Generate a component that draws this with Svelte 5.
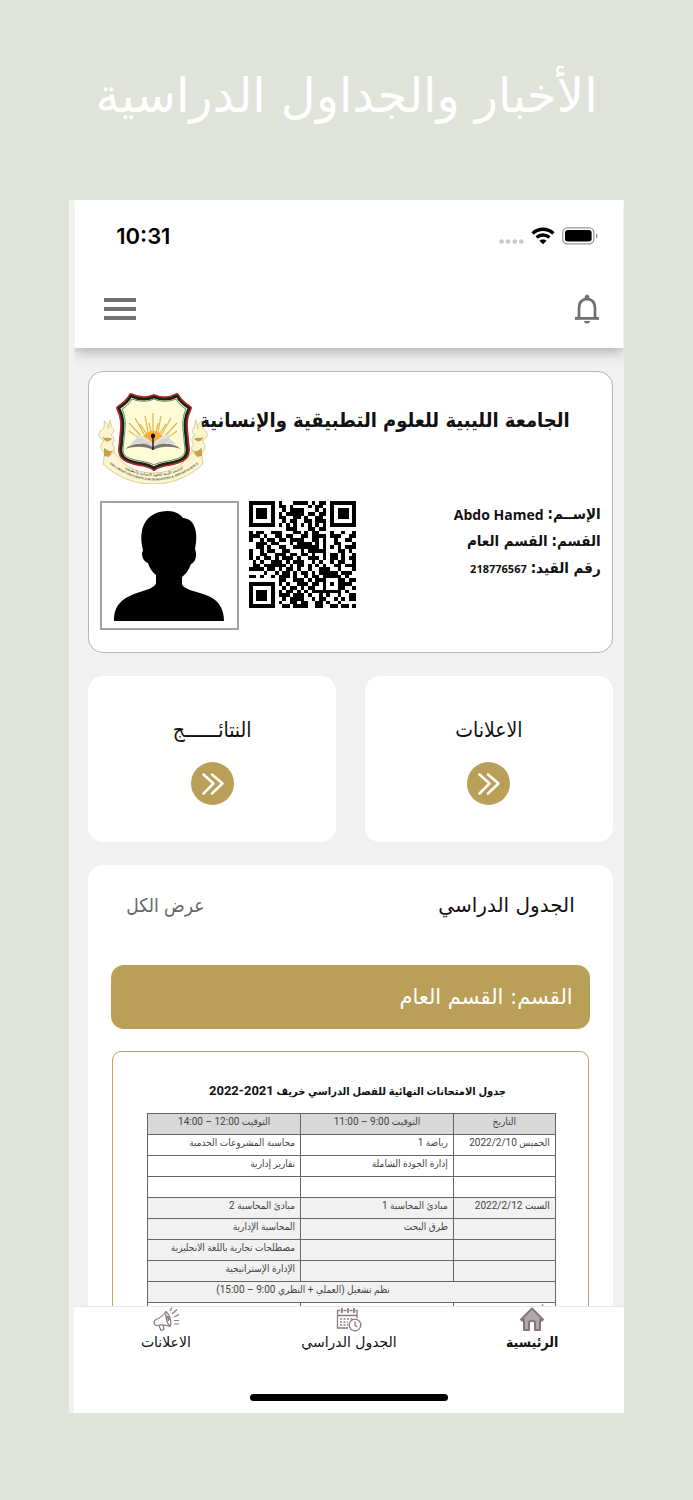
<script>
  const student = [
    { label: 'الإســم:', value: 'Abdo Hamed', kind: 'name' },
    { label: 'القسم:', value: 'القسم العام', kind: 'dept' },
    { label: 'رقم القيد:', value: '218776567', kind: 'number' }
  ];

  const shortcuts = [
    { title: 'الاعلانات', href: '#news' },
    { title: 'النتائــــــج', href: '#results' }
  ];

  const exams = [
    { cells: ['الخميس 2022/2/10', 'رياضة 1', 'محاسبة المشروعات الخدمية'] },
    { cells: ['', 'إدارة الجودة الشاملة', 'تقارير إدارية'] },
    { cells: ['', '', ''] },
    { cells: ['السبت 2022/2/12', 'مبادئ المحاسبة 1', 'مبادئ المحاسبة 2'], shaded: true },
    { cells: ['', 'طرق البحث', 'المحاسبة الإدارية'], shaded: true },
    { cells: ['', '', 'مصطلحات تجارية باللغة الانجليزية'], shaded: true },
    { cells: ['', '', 'الإدارة الإستراتيجية'], shaded: true },
    { wide: 'نظم تشغيل (العملي + النظري 9:00 – 15:00)', shaded: true },
    { cells: ['الأحد 2022/2/13', '', ''] }
  ];

  const qr = [
    '11111110100011110101101111111',
    '10000010110100001011001000001',
    '10111010010111100010101011101',
    '10111010101111101101101011101',
    '10111010110011010011001011101',
    '10000010010110011011101000001',
    '11111110101010101010101111111',
    '00000000001110001101100000000',
    '10110011100011010110001001001',
    '11101001101100110111101110011',
    '10010110110111100110100100110',
    '00111011000101111010100110001',
    '00110100110011111110101010111',
    '10010110011000101111100011010',
    '10011001110110110100101101001',
    '10101101011101001110101101011',
    '01010011101011100101001011001',
    '01101111110101101010100110111',
    '11110110101101001001110010001',
    '00001001011010110101111101110',
    '11010010111010010110111110100',
    '00000000110011101011100011011',
    '11111110101001110110101011110',
    '10000010010110101100100011001',
    '10111010101101010111111110100',
    '10111010111011101001010010011',
    '10111010010111100101100101011',
    '10000010100110110011010010000',
    '11111110011011110011001101101'
  ];

  const qrPath = qr
    .map((row, y) => [...row].map((c, x) => (c === '1' ? `M${x} ${y}h1v1h-1z` : '')).join(''))
    .join('');
</script>

<div class="page" dir="rtl" lang="ar">
  <h1>الأخبار والجداول الدراسية</h1>

  <main class="phone">
    <header>
      <div class="status" dir="ltr">
        <span class="time">10:31</span>
        <div class="signals">
          <svg width="25" height="5" viewBox="0 0 25 5" fill="#cacaca">
            <circle cx="2.5" cy="2.5" r="2.3" />
            <circle cx="9" cy="2.5" r="2.3" />
            <circle cx="15.8" cy="2.5" r="2.3" />
            <circle cx="22.4" cy="2.5" r="2.3" />
          </svg>
          <svg class="wifi" width="24" height="18" viewBox="0 0 24 18" fill="none" stroke="#000" stroke-width="3.4">
            <path d="M1.6 6.4C7.4 .9 16.6 .9 22.4 6.4" />
            <path d="M5.6 10.6c3.7-3.4 9.1-3.4 12.8 0" />
            <path d="M12 17.2 8.4 13.8c2-1.9 5.2-1.9 7.2 0z" fill="#000" stroke="none" />
          </svg>
          <svg width="36" height="18" viewBox="0 0 36 18">
            <rect x=".8" y=".8" width="31" height="16" rx="4.5" fill="none" stroke="#999" stroke-width="1.3" />
            <rect x="3" y="3" width="26.6" height="11.6" rx="2.5" />
            <path d="M34 6.4c2 .8 2 4.2 0 5z" fill="#888" />
          </svg>
        </div>
      </div>
      <div class="toolbar">
        <button aria-label="الإشعارات">
          <svg width="26" height="30" viewBox="0 0 26 30">
            <path
              d="M5 24V14.5C5 8.5 8 5.2 13 4.8c5 .4 8 3.7 8 9.7V24M1 24.4h24"
              fill="none"
              stroke="#707070"
              stroke-width="2.7"
            />
            <path d="M10.5 4.5C10.5 2 12 .6 13 .6S15.500 2 15.500 4.500zM10 27h6c-.4 1.800-1.600 2.500-3 2.500s-2.600-.7-3-2.500zM.6 25.600l4-4v4zM25.400 25.600l-4-4v4z" fill="#707070" />
          </svg>
        </button>
        <button aria-label="القائمة">
          <svg width="32" height="24" viewBox="0 0 32 24" fill="#707070">
            <path d="M0 1h32v4H0zM0 10h32v4H0zM0 19h32v4H0z" />
          </svg>
        </button>
      </div>
    </header>

    <div class="content">
      <section class="id-card">
        <div class="id-head">
          <h2>الجامعة الليبية للعلوم التطبيقية والإنسانية</h2>
          <svg class="crest" viewBox="0 0 110 92" aria-hidden="true">
            <defs>
              <path id="ribbon-ar" d="M14 69Q56 99 98 69" />
              <path id="ribbon-en" d="M9 70Q56 107 103 70" />
            </defs>
            <g fill="#fbf6cf" stroke="#d6c17c" stroke-width=".8">
              <path d="M7 59 5 72C18 84 34 92 55 92s37-8 50-20l-2-13-8-1C87 72 74 81 55 81S23 72 15 58z" />
              <path d="M6 61C1 56 3 51 6 49c-6-3-7-9-2-11 2-2 3-5 2-9 3 1 5 5 4 8l2-9 2 8c3 1 2 5-1 7 4 2 4 7 1 9 4 3 2 8-1 11z" />
              <path d="M104 61c5-5 3-10 0-12 6-3 7-9 2-11-2-2-3-5-2-9-3 1-5 5-4 8l-2-9-2 8c-3 1-2 5 1 7-4 2-4 7-1 9-4 3-2 8 1 11z" />
            </g>
            <g fill="#c7a04c">
              <path d="M4 44c3 4 6 0 10 3-4 4-8 3-10-3zM6 56c4 2 6 5 9 2l-4 7-5-1z" />
              <path d="M106 44c-3 4-6 0-10 3 4 4 8 3 10-3zM104 56c-4 2-6 5-9 2l4 7 5-1z" />
            </g>
            <g transform="translate(1 0)" stroke-linejoin="round">
              <path d="M32 3c8 4 16 4 23 1 7 3 16 3 23-1 3 6 7 9 13 13-6 12-4 20-3 31 0 4 1 8 1 11 0 9-8 12-19 14-7 1-12 2-15 5-3-3-8-4-15-5-11-2-19-5-19-14 0-3 1-7 1-11 1-11 3-19-3-31 6-4 10-7 13-13z" fill="#fffbd6" stroke="#b52a22" stroke-width="4" />
              <path d="M32 4c8 4 16 4 23 1 7 3 16 3 23-1 3 6 7 9 12 12-6 12-4 20-3 31 0 4 1 8 1 11 0 8-7 11-18 13-7 1-12 2-15 5-3-3-8-4-15-5-11-2-18-5-18-13 0-3 1-7 1-11 1-11 3-19-3-31 5-3 9-6 12-12z" fill="#fffbd6" stroke="#16251a" stroke-width="2.600" />
              <path d="M33 7c8 3 15 3 22 0 7 3 14 3 22 0 3 5 6 8 10 10-5 11-3 19-2 30 0 4 1 8 1 11 0 7-7 9-17 11-6 1-11 2-14 4-3-2-8-3-14-4-10-2-17-4-17-11 0-3 1-7 1-11 1-11 3-19-2-30 4-2 7-5 10-10z" fill="none" stroke="#6a8a5c" stroke-width="1" />
            </g>
            <path
              d="M55 40V21M50 40l-3-16M60 40l3-16M46 42l-9-16M64 42l9-16M43 44 31 31M67 44l12-13M41 46l-10-7M69 46l10-7M53 40l-2-9M58 40l2-9M48 41l-6-9M62 41l6-9"
              stroke="#e0b84f"
              stroke-width="1.300"
            />
            <path d="M43 53c0-19 24-19 24 0z" fill="#f8ae38" />
            <path d="m54 55-19-13c7 0 14 3 20 10 6-7 13-10 20-10L56 55z" fill="#e8e5df" />
            <path d="M27 57c9-7 20-6 28-2 8-4 19-5 28 2-10-3-20-3-28 1-8-4-18-4-28-1z" fill="#777" />
            <path d="m31 53 8-7c6 0 12 3 16 8 4-5 10-8 16-8l8 7c-10-3-18-2-24 2-6-4-14-5-24-2z" fill="#d6d6d6" />
            <path d="M54.300 58V46.500c-2.500-1.500-1.500-5 .7-5s3.200 3.500.7 5V58z" fill="#18120d" />
            <text class="ribbon" direction="rtl" text-anchor="middle">
              <textPath href="#ribbon-ar" startOffset="50%">الجامعة الليبية للعلوم الإنسانية والتطبيقية</textPath>
            </text>
            <text class="ribbon latin" direction="ltr" text-anchor="middle">
              <textPath href="#ribbon-en" startOffset="50%">THE LIBYAN UNIVERSITY FOR HUMANITIES &amp; APPLIED SCIENCE</textPath>
            </text>
          </svg>
        </div>

        <div class="id-body">
          <dl>
            {#each student as row}
              <div>
                <dt>{row.label}</dt>
                <dd class={row.kind}>{row.value}</dd>
              </div>
            {/each}
          </dl>
          <svg class="qr" viewBox="0 0 29 29" shape-rendering="crispEdges" role="img" aria-label="QR">
            <path d={qrPath} />
          </svg>
          <div class="photo">
            <svg viewBox="0 0 110 110" role="img" aria-label="صورة الطالب">
              <path d="M0 110C0 94 8 88 20 83c12-4 21-6 22-11V64c-4-3-7-8-8-12-4-1-6-6-6-9 0-2 1-3 1-4C23 15 34 0 54 0c7 0 12 3 15 7 11 0 16 14 12 31 1 3 1 4 1 6 0 4-2 8-5 9-2 5-4 9-9 13v7c1 5 12 7 24 11 11 4 18 12 18 26z" />
            </svg>
          </div>
        </div>
      </section>

      <nav class="shortcuts">
        {#each shortcuts as item}
          <a href={item.href}>
            <span>{item.title}</span>
            <svg width="43" height="43" viewBox="0 0 43 43" fill="none">
              <circle cx="21.500" cy="21.500" r="21.500" fill="#b99f57" />
              <path
                d="M12.500 12.500l10 9-10 10M21 12.500l10.500 9-10.500 10"
                stroke="#fff"
                stroke-width="2.600"
                stroke-linecap="round"
                stroke-linejoin="round"
              />
            </svg>
          </a>
        {/each}
      </nav>

      <section class="schedule">
        <div class="schedule-head">
          <h2>الجدول الدراسي</h2>
          <a href="#schedule">عرض الكل</a>
        </div>
        <p class="department">القسم: القسم العام</p>

        <div class="sheet">
          <h3>جدول الامتحانات النهائية للفصل الدراسي خريف <bdi>2022-2021</bdi></h3>
          <table>
            <thead>
              <tr>
                <th class="date">التاريخ</th>
                <th>التوقيت 9:00 – 11:00</th>
                <th>التوقيت 12:00 – 14:00</th>
              </tr>
            </thead>
            <tbody>
              {#each exams as row}
                <tr class:shaded={row.shaded}>
                  {#if row.wide}
                    <td class="wide" colspan="3">{row.wide}</td>
                  {:else}
                    {#each row.cells as cell}
                      <td>{cell}</td>
                    {/each}
                  {/if}
                </tr>
              {/each}
            </tbody>
          </table>
        </div>
      </section>
    </div>

    <footer>
      <nav class="tabs">
        <a href="#home" class="active">
          <svg width="26" height="25" viewBox="0 0 26 25">
            <path
              d="M13 1.500 2 12.500l1.300 1.200L5 12.500V23h5v-7c0-3 6-3 6 0v7h5V12.500l1.700 1.200 1.300-1.200z"
              fill="#aaa"
              stroke="#857777"
              stroke-width="2"
              stroke-linejoin="round"
            />
          </svg>
          <span>الرئيسية</span>
        </a>
        <a href="#schedule">
          <svg width="26" height="25" viewBox="0 0 26 25" fill="none" stroke="#8b7d7d" stroke-width="1.300">
            <path d="M12 21H1.500V3.500h3m3 0h3m3 0h3m3 0h1.500V11M1.500 8.500H21" />
            <path d="M6 1v5M12 1v5M18 1v5" stroke-width="1.800" />
            <path d="M4 12h13M4 15h8M4 18h8" stroke-dasharray="2 1.500" />
            <circle cx="19" cy="18" r="5.800" />
            <path d="M19 14.500V18l2 2" />
          </svg>
          <span>الجدول الدراسي</span>
        </a>
        <a href="#news">
          <svg width="26" height="25" viewBox="0 0 26 25" fill="none" stroke="#8b7d7d" stroke-width="1.200" stroke-linejoin="round">
            <path d="M13 4.500C10 9 7 11 3 12.500c-3 1.500-2 6 1 6 4-1 8-1 13 1 2-4 0-12-4-15z" />
            <path d="M13 4.500c-1 5 1 12 4 15M6 18.500l2 5 3-1-1-4.500" />
            <path d="M14 9c2 0 3 3 1.500 4.500z" fill="#8b7d7d" />
            <path d="M17 4l2-3.500M19 7l5-4.500M21 10l5-2.500M21 13.500h5M21 17h5" />
          </svg>
          <span>الاعلانات</span>
        </a>
      </nav>
      <div class="home-bar"></div>
    </footer>
  </main>
</div>

<style>
  :global(body) {
    margin: 0;
    background: #e0e3da;
  }

  .page {
    box-sizing: border-box;
    display: flex;
    flex-direction: column;
    height: 100vh;
    min-height: 900px;
    padding: 0 10% 87px;
    font-family: 'DejaVu Sans Condensed', 'DejaVu Sans', sans-serif;
    color: #111;
  }

  h1, h2, h3, p, dl, dd {
    margin: 0;
  }

  h1 {
    flex: none;
    height: 200px;
    line-height: 190px;
    text-align: center;
    white-space: nowrap;
    font-family: 'DejaVu Sans', sans-serif;
    font-size: 48px;
    font-weight: 400;
    color: #fff;
  }

  a {
    color: inherit;
    text-decoration: none;
  }

  svg {
    display: block;
  }

  .phone {
    display: flex;
    flex: 1;
    flex-direction: column;
    min-height: 0;
    border-left: 5px solid #f1f1f1;
    background: #f1f1f1;
  }

  header {
    position: relative;
    flex: none;
    background: #fff;
    box-shadow: 0 2px 14px rgba(0, 0, 0, 0.35);
    clip-path: inset(0 0 -20px 0);
  }

  .status {
    display: flex;
    align-items: center;
    justify-content: space-between;
    height: 72px;
    padding: 0 26px 0 42px;
  }

  .time {
    font-family: Inter, sans-serif;
    font-size: 22px;
    font-weight: 600;
    color: #000;
  }

  .signals {
    display: flex;
    align-items: center;
    gap: 7px;
  }

  .signals svg:first-child {
    margin-top: 10px;
  }

  .toolbar {
    display: flex;
    align-items: center;
    justify-content: space-between;
    height: 76px;
    padding: 0 24px 3px 30px;
    box-sizing: border-box;
  }

  button {
    padding: 0;
    border: none;
    background: none;
    cursor: pointer;
  }

  .content {
    display: flex;
    flex: 1;
    flex-direction: column;
    gap: 23px;
    min-height: 0;
    padding: 23px 11px 0 14px;
    overflow: hidden;
  }

  .id-card,
  .shortcuts,
  .schedule {
    flex: none;
  }

  .id-card {
    box-sizing: border-box;
    min-height: 282px;
    padding: 20px 11px;
    border: 1px solid #b9b4b6;
    border-radius: 15px;
    background: #fff;
  }

  .id-head {
    display: flex;
    justify-content: space-between;
    padding-right: 31px;
  }

  .id-head h2 {
    margin-top: 14px;
    white-space: nowrap;
    font-size: 20px;
    font-weight: 700;
    line-height: 28px;
  }

  .crest {
    flex: none;
    width: 110px;
    height: 92px;
    margin: 0 -10px 0 -2px;
  }

  .ribbon {
    font-size: 4px;
    fill: #333;
  }

  .latin {
    font-family: 'Liberation Serif', serif;
    font-size: 3px;
    font-weight: 700;
  }

  .id-body {
    display: flex;
    align-items: flex-start;
    gap: 10px;
    margin-top: 17px;
  }

  dl {
    flex: 1;
    font-size: 15px;
    font-weight: 700;
    line-height: 27px;
  }

  dl div {
    display: flex;
    gap: 4px;
  }

  .name {
    font-family: 'Open Sans', sans-serif;
    font-size: 14px;
  }

  .number {
    font-family: 'Open Sans', sans-serif;
    font-size: 11px;
  }

  .qr {
    width: 107px;
    height: 107px;
  }

  .photo {
    box-sizing: border-box;
    width: 139px;
    height: 129px;
    padding: 8px 13px;
    border: 2px solid #a89da2;
  }

  .photo svg {
    width: 110px;
    height: 110px;
  }

  .shortcuts {
    display: grid;
    grid-template-columns: 1fr 1fr;
    gap: 29px;
  }

  .shortcuts a {
    display: flex;
    flex-direction: column;
    align-items: center;
    gap: 17px;
    padding: 39px 0 37px;
    border-radius: 15px;
    background: #fff;
    font-size: 21px;
    line-height: 30px;
  }

  .schedule {
    padding: 24px 23px;
    border-radius: 15px;
    background: #fff;
  }

  .schedule-head {
    display: flex;
    justify-content: space-between;
    padding: 0 15px;
    font-size: 19px;
    line-height: 32px;
  }

  .schedule-head h2 {
    font-family: 'DejaVu Sans', sans-serif;
    font-size: 20px;
    font-weight: 400;
  }

  .schedule-head a {
    color: #666;
  }

  .department {
    margin: 44px 0 22px;
    padding: 0 17px;
    border-radius: 13px;
    background: #b99f57;
    font-family: 'DejaVu Sans', sans-serif;
    font-size: 21px;
    line-height: 64px;
    color: #fff;
  }

  .sheet {
    margin: 0 1px;
    padding: 25px 32px 25px 34px;
    border: 1px solid #bfa45c;
    border-radius: 9px;
  }

  h3 {
    margin-bottom: 7px;
    padding-left: 12px;
    text-align: center;
    font-family: Roboto, 'DejaVu Sans Condensed', sans-serif;
    font-size: 11px;
    font-weight: 700;
    line-height: 28px;
    white-space: nowrap;
  }

  h3 bdi {
    font-size: 13px;
  }

  table {
    width: 100%;
    border-collapse: collapse;
    table-layout: fixed;
    font-family: Roboto, 'DejaVu Sans Condensed', sans-serif;
    font-size: 10px;
    line-height: 14px;
    color: #444;
  }

  th,
  td {
    box-sizing: border-box;
    height: 21px;
    padding: 1px 5px 5px;
    border: 1px solid #666;
    text-align: right;
    font-weight: 400;
    white-space: nowrap;
  }

  th {
    background: #d8d8d8;
    text-align: center;
  }

  .date {
    width: 25%;
  }

  .shaded {
    background: #f1f1f1;
  }

  .wide {
    padding-right: 25%;
    text-align: center;
  }

  footer {
    position: relative;
    flex: none;
    border-top: 1px solid #e6e6e6;
    background: #fff;
  }

  .tabs {
    display: grid;
    grid-template-columns: 1fr 1fr 1fr;
  }

  .tabs a {
    display: flex;
    flex-direction: column;
    align-items: center;
    font-family: 'DejaVu Sans', sans-serif;
    font-size: 14px;
    line-height: 20px;
  }

  .tabs .active {
    font-family: 'DejaVu Sans Condensed', 'DejaVu Sans', sans-serif;
    font-weight: 700;
  }

  .home-bar {
    width: 36%;
    height: 7px;
    margin: 42px auto 12px;
    border-radius: 4px;
    background: #000;
  }
</style>
